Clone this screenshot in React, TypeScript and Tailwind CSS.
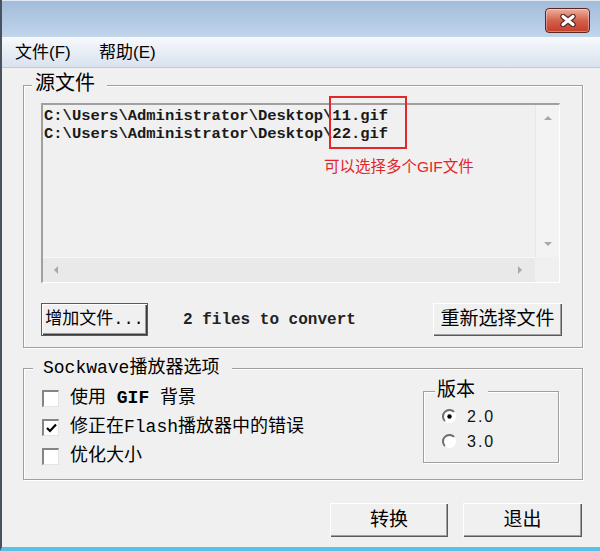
import { ReactNode } from "react";

const cjk = "font-['Liberation_Sans','Noto_Sans_CJK_SC',sans-serif]";
const mono = "font-['Liberation_Mono','Noto_Sans_CJK_SC',monospace]";

// raised win-classic button
function Button({
  children,
  className = "",
  isDefault = false,
}: {
  children: ReactNode;
  className?: string;
  isDefault?: boolean;
}) {
  return (
    <div
      className={`flex items-center justify-center bg-[#f0f0f0] text-black ${
        isDefault
          ? "border border-[#5a5a5a] shadow-[inset_1px_1px_0_#fff,inset_-1px_-1px_0_#3c3c3c,inset_-2px_-2px_0_#9a9a9a]"
          : "shadow-[inset_1px_1px_0_#fff,inset_-1px_-1px_0_#5a5a5a,inset_-2px_-2px_0_#a0a0a0]"
      } ${className}`}
    >
      {children}
    </div>
  );
}

function Checkbox({ checked = false }: { checked?: boolean }) {
  return (
    <div className="w-[17px] h-[17px] shrink-0 bg-white border-t-2 border-l-2 border-t-[#858585] border-l-[#858585] border-r border-b border-r-[#e4e4e4] border-b-[#e4e4e4] flex items-center justify-center">
      {checked && (
        <svg width="11" height="10" viewBox="0 0 11 10">
          <path d="M1 5 L4 8 L10 1.5" stroke="#000" strokeWidth="2.2" fill="none" />
        </svg>
      )}
    </div>
  );
}

function Radio({ checked = false }: { checked?: boolean }) {
  return (
    <svg width="15" height="15" viewBox="0 0 15 15" className="shrink-0">
      <circle cx="7.5" cy="7.5" r="6.5" fill="#fff" />
      <path
        d="M12.1 2.9 A6.5 6.5 0 0 0 2.9 12.1"
        stroke="#6e6e6e"
        strokeWidth="2"
        fill="none"
      />
      {checked && <circle cx="7.5" cy="7.5" r="2.2" fill="#000" />}
    </svg>
  );
}

function Tri({ dir }: { dir: "up" | "down" | "left" | "right" }) {
  const d = {
    up: "M0 5 L4 1 L8 5 Z",
    down: "M0 1 L4 5 L8 1 Z",
    left: "M5 0 L1 4 L5 8 Z",
    right: "M1 0 L5 4 L1 8 Z",
  }[dir];
  const vert = dir === "up" || dir === "down";
  return (
    <svg width={vert ? 8 : 6} height={vert ? 6 : 8} viewBox={vert ? "0 0 8 6" : "0 0 6 8"}>
      <path d={d} fill="#a8a8a8" />
    </svg>
  );
}

const etched =
  "border border-[#a0a0a0] shadow-[inset_1px_1px_0_#fff,1px_1px_0_#fff]";

export default function App() {
  return (
    <div
      className={`w-[600px] h-[551px] flex flex-col bg-[#f0f0f0] border-l-2 border-l-[#4a525e] border-b-4 border-b-[#55c2e8] overflow-hidden ${cjk}`}
    >
      {/* title bar */}
      <div className="h-[37px] shrink-0 bg-linear-to-b from-[#a2bcda] to-[#c1d5eb] flex justify-end items-start pt-[7px] pr-[10px] border-t border-t-[#dfe8f3]">
        <div className="w-[45px] h-[25px] rounded-[4px] border border-[#5a2820] bg-linear-to-b from-[#eab0a2] via-[#d5604b] to-[#c23e2a] flex items-center justify-center shadow-[inset_0_0_0_1px_rgba(255,255,255,0.35)]">
          <svg width="18" height="13" viewBox="0 0 18 13">
            <path d="M4 2.5 L14 10.5 M14 2.5 L4 10.5" stroke="#5b2a22" strokeWidth="5.5" strokeLinecap="round" />
            <path d="M4 2.5 L14 10.5 M14 2.5 L4 10.5" stroke="#fff" strokeWidth="3.2" strokeLinecap="round" />
          </svg>
        </div>
      </div>

      {/* menu bar */}
      <div className="h-[31px] shrink-0 bg-linear-to-b from-[#f7f9fc] to-[#d9e2ee] border-b border-b-[#c3cad5] flex items-center pl-[13px] pt-[1px] text-[17px] text-black">
        <span className="w-[84px]">文件(F)</span>
        <span>帮助(E)</span>
      </div>

      {/* body */}
      <div className="flex-1 flex flex-col pl-[21px]">
        {/* source files group */}
        <div className={`relative mt-[17px] w-[560px] h-[263px] pt-[17px] pl-[17px] ${etched}`}>
          <span className="absolute left-[8px] top-[-15px] bg-[#f0f0f0] pl-[3px] pr-[12px] text-[20px] leading-[24px] text-black">
            源文件
          </span>

          <div className="relative w-[519px] h-[180px] border-t-2 border-l-2 border-t-[#a0a0a0] border-l-[#a0a0a0] border-r border-b border-r-white border-b-white grid grid-cols-[1fr_24px] grid-rows-[1fr_25px]">
            <div className={`pt-[2px] pl-[1px] text-[15.5px] leading-[18px] font-bold text-[#1a1a1a] ${mono}`}>
              <div>C:\Users\Administrator\Desktop\11.gif</div>
              <div>C:\Users\Administrator\Desktop\22.gif</div>
            </div>
            <div className="bg-[#f3f3f3] border-l border-l-[#e6e6e6] flex flex-col items-center justify-between py-[10px]">
              <Tri dir="up" />
              <Tri dir="down" />
            </div>
            <div className="bg-[#e9e9e9] border-t border-t-[#f7f7f7] flex items-center justify-between pl-[10px] pr-[12px]">
              <Tri dir="left" />
              <Tri dir="right" />
            </div>
            <div className="bg-[#f0f0f0]" />

            {/* annotation */}
            <div className="absolute left-[286px] top-[-9px] w-[78px] h-[53px] border-2 border-[#e3262a]" />
            <span className="absolute left-[281px] top-[52px] text-[15.5px] leading-[20px] text-[#e3262a] whitespace-nowrap">
              可以选择多个GIF文件
            </span>
          </div>

          <div className="mt-[20px] w-[521px] flex items-center">
            <Button isDefault className={`w-[107px] h-[33px] text-[17px] ${mono}`}>
              增加文件...
            </Button>
            <span className={`ml-[35px] text-[16px] font-bold text-[#222] ${mono}`}>
              2 files to convert
            </span>
            <Button className="ml-auto w-[129px] h-[33px] text-[19px]">重新选择文件</Button>
          </div>
        </div>

        {/* sockwave options group */}
        <div className={`relative mt-[20px] w-[560px] h-[112px] flex ${etched}`}>
          <span className={`absolute left-[9px] top-[-13px] bg-[#f0f0f0] pl-[10px] pr-[13px] text-[18px] leading-[24px] text-black ${mono}`}>
            Sockwave播放器选项
          </span>

          <div className={`flex flex-col pt-[15px] pl-[18px] text-[18px] text-black ${mono}`}>
            <div className="h-[29px] flex items-center">
              <Checkbox />
              <span className="ml-[11px]">
                使用 <span className="font-bold">GIF</span> 背景
              </span>
            </div>
            <div className="h-[29px] flex items-center">
              <Checkbox checked />
              <span className="ml-[11px]">修正在Flash播放器中的错误</span>
            </div>
            <div className="h-[29px] flex items-center">
              <Checkbox />
              <span className="ml-[11px]">优化大小</span>
            </div>
          </div>

          <div className={`relative ml-auto mr-[23px] mt-[22px] w-[136px] h-[72px] flex flex-col pt-[12px] pl-[18px] ${etched}`}>
            <span className="absolute left-[11px] top-[-14px] bg-[#f0f0f0] pl-[2px] pr-[13px] text-[19px] leading-[24px] text-black">
              版本
            </span>
            <div className="h-[25px] flex items-center">
              <Radio checked />
              <span className="ml-[10px] text-[16px] tracking-[2px] text-[#111]">2.0</span>
            </div>
            <div className="h-[25px] flex items-center">
              <Radio />
              <span className="ml-[10px] text-[16px] tracking-[2px] text-[#111]">3.0</span>
            </div>
          </div>
        </div>

        {/* bottom buttons */}
        <div className="mt-[23px] flex justify-end gap-[15px] pr-[18px]">
          <Button className="w-[118px] h-[34px] text-[19px]">转换</Button>
          <Button className="w-[119px] h-[34px] text-[19px]">退出</Button>
        </div>
      </div>
    </div>
  );
}
